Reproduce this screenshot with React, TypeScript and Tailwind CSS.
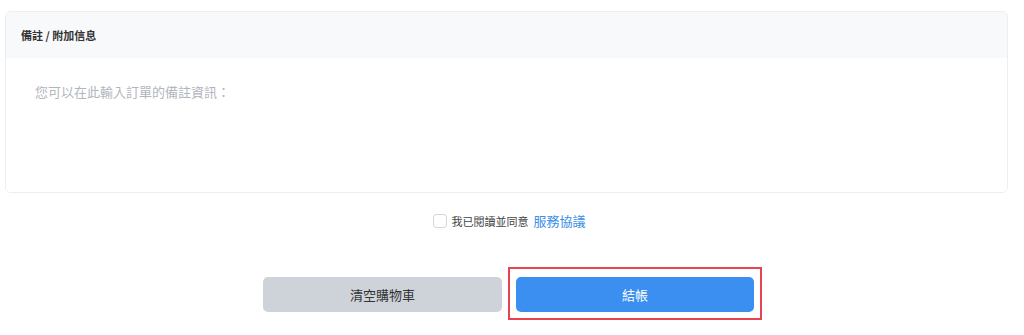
export default function App() {
  const font = { fontFamily: '"Noto Sans CJK TC", "Noto Sans", sans-serif' };
  return (
    <div className="w-[1024px] h-[335px] bg-white overflow-hidden" style={font}>
      <div className="pt-[11px] px-[5px] w-[1013px]">
        <div className="border border-[#eceef1] rounded-[6px] overflow-hidden h-[182px] flex flex-col">
          <div className="bg-[#f8f9fa] h-[46px] flex items-center px-[15px] text-[11px] font-bold text-[#333]">
            備註 / 附加信息
          </div>
          <div className="flex-1 bg-white px-[29px] pt-[24px] text-[13px] text-[#b1b6bd]">
            您可以在此輸入訂單的備註資訊：
          </div>
        </div>
      </div>
      <div className="flex items-center justify-center mt-[20px] h-[16px] pr-[5px]">
        <span className="w-[14px] h-[14px] border border-[#d4d7dc] rounded-[3px] bg-white mr-[4px]" />
        <span className="text-[11px] text-[#444]">我已閱讀並同意</span>
        <span className="text-[13px] text-[#3a8ee6] ml-[5px]">服務協議</span>
      </div>
      <div className="flex justify-center items-start mt-[38px] pl-[1px]">
        <button className="w-[239px] h-[35px] mt-[10px] rounded-[5px] bg-[#ced3da] text-[13px] text-[#333]">
          清空購物車
        </button>
        <div className="ml-[6px] border-2 border-[#e8434f] pt-[8px] pb-[6px] px-[6px]">
          <button className="w-[238px] h-[35px] rounded-[5px] bg-[#3a8ff0] text-[13px] text-white block">
            結帳
          </button>
        </div>
      </div>
    </div>
  );
}
